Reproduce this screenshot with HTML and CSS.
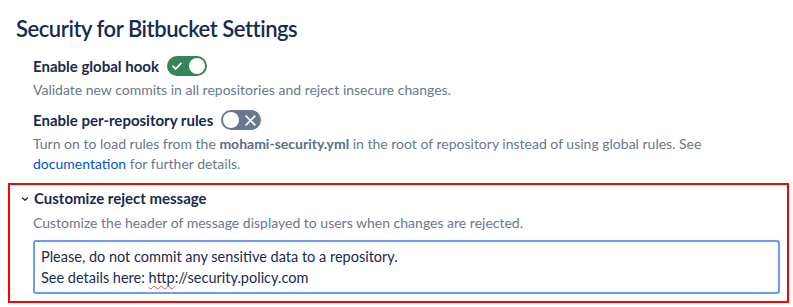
FILE: index.html
```html
<!DOCTYPE html>
<html lang="en">
<head>
  <meta charset="UTF-8" />
  <meta name="viewport" content="width=device-width, initial-scale=1.0" />
  <title>Security for Bitbucket Settings</title>
  <link rel="stylesheet" href="styles.css">
</head>
<body>

<div class="page">
  <h1 class="page-title">Security for Bitbucket Settings</h1>

  <div class="setting">
    <div class="setting-label">
      <span>Enable global hook</span>
      <span class="toggle on">
        <svg class="toggle-icon" width="12" height="12" viewBox="0 0 12 12"><path d="M2 6.3 L4.8 9 L10 3.4" fill="none" stroke="#fff" stroke-width="1.8" stroke-linecap="round" stroke-linejoin="round"/></svg>
        <span class="knob"></span>
      </span>
    </div>
    <div class="setting-desc">Validate new commits in all repositories and reject insecure changes.</div>
  </div>

  <div class="setting">
    <div class="setting-label">
      <span>Enable per-repository rules</span>
      <span class="toggle off">
        <span class="knob"></span>
        <svg class="toggle-icon" width="13" height="13" viewBox="0 0 12 12"><path d="M2 2 L10 10 M10 2 L2 10" fill="none" stroke="#fff" stroke-width="1.6" stroke-linecap="round"/></svg>
      </span>
    </div>
    <div class="setting-desc">Turn on to load rules from the <strong>mohami-security.yml</strong> in the root of repository instead of using global rules. See <a href="#">documentation</a> for further details.</div>
  </div>

  <div class="setting highlighted">
    <div class="setting-label">
      <svg class="chevron" width="8" height="8" viewBox="0 0 8 8"><path d="M1.5 3 L4 5.3 L6.5 3" fill="none" stroke="#172b4d" stroke-width="1.4" stroke-linecap="round" stroke-linejoin="round"/></svg>
      <span>Customize reject message</span>
    </div>
    <div class="setting-desc">Customize the header of message displayed to users when changes are rejected.</div>
    <div class="message-box">
      <div>Please, do not commit any sensitive data to a repository.</div>
      <div>See details here: <span class="misspelled">http</span>://security.policy.com</div>
    </div>
  </div>
</div>

</body>
</html>
```

FILE: styles.css
```css
body {
  font-family: Lato, "Noto Sans", sans-serif;
  background-color: white;
  color: #172b4d;
  margin: 0;
  padding: 0;
}

.page {
  padding: 0 4px 0 8px;
}

.page-title {
  font-size: 22px;
  font-weight: 600;
  letter-spacing: -0.45px;
  margin: 0;
  padding: 15px 0 0 8px;
  line-height: 28px;
  height: 37px;
}

.setting {
  padding-left: 25px;
  padding-right: 10px;
}

.setting-label {
  display: flex;
  align-items: center;
  gap: 8px;
  font-size: 15px;
  font-weight: 700;
  height: 26px;
  margin-top: 1px;
}

.setting-desc {
  font-size: 14px;
  color: #6b778c;
  line-height: 20px;
  padding-top: 1px;
  margin-bottom: 7px;
}

.setting-desc strong {
  color: #5e6c84;
}

.setting-desc a {
  color: #0052cc;
  text-decoration: none;
}

.toggle {
  display: inline-flex;
  align-items: center;
  justify-content: space-between;
  width: 40px;
  height: 20px;
  border-radius: 10px;
  padding: 0 2px 0 4px;
  box-sizing: border-box;
}

.toggle.on {
  background: #36845a;
}

.toggle.off {
  background: #6b778c;
  padding: 0 4px 0 2px;
}

.knob {
  width: 16px;
  height: 16px;
  border-radius: 50%;
  background: #fff;
}

.highlighted {
  border: 2px solid #ff0000;
  padding: 0 7px 7px 13px;
  margin-top: 9px;
}

.highlighted .setting-label {
  gap: 5px;
  margin-top: 0;
  margin-left: -2px;
}

.chevron {
  margin-top: 1px;
}

.highlighted .setting-desc {
  padding-left: 10px;
  padding-top: 2px;
  margin-bottom: 7px;
}

.message-box {
  margin-left: 10px;
  border: 2px solid #6b9bf5;
  border-radius: 3px;
  padding: 4px 6px;
  font-size: 14.5px;
  line-height: 21px;
  color: #172b4d;
  height: 42px;
}

.misspelled {
  text-decoration: underline wavy #e34c4c;
  text-decoration-thickness: 1px;
  text-underline-offset: 2px;
}
```
